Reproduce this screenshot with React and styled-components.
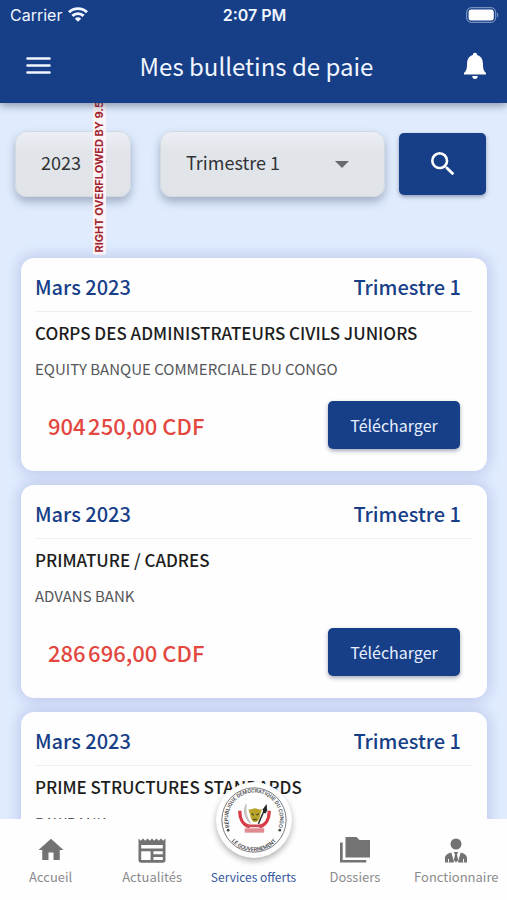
import React, { useState } from "react";
import styled, { createGlobalStyle } from "styled-components";

const blue = "#173f88";

const GlobalStyle = createGlobalStyle`
  * {
    box-sizing: border-box;
  }
  body {
    margin: 0;
    font-family: "Noto Sans CJK SC", "Open Sans", sans-serif;
    background: #e0ecfe;
  }
  button, select {
    font-family: inherit;
  }
`;

const Screen = styled.div`
  display: flex;
  flex-direction: column;
  height: 100vh;
  overflow: hidden;
`;

const Header = styled.header`
  position: relative;
  z-index: 2;
  background: ${blue};
  color: #f1f6ff;
  box-shadow: 0 3px 8px rgba(40, 50, 80, 0.45);
`;

const StatusBar = styled.div`
  display: grid;
  grid-template-columns: 1fr auto 1fr;
  align-items: center;
  height: 29px;
  padding: 0 8px 0 10px;
  font-family: Inter, "Liberation Sans", sans-serif;
  font-size: 16px;
`;

const Carrier = styled.div`
  display: flex;
  align-items: center;
  gap: 6px;
`;

const Clock = styled.div`
  font-weight: 600;
`;

const Battery = styled.svg`
  justify-self: end;
`;

const AppBar = styled.div`
  display: flex;
  align-items: center;
  justify-content: space-between;
  height: 74px;
  padding: 0 16px 0 22px;
`;

const Title = styled.h1`
  margin: 0;
  font-size: 24px;
  line-height: 32px;
  font-weight: 400;
`;

const IconButton = styled.button`
  display: flex;
  padding: 0;
  border: 0;
  background: none;
  color: inherit;
  cursor: pointer;
`;

const Content = styled.main`
  flex: 1;
  min-height: 0;
  overflow-y: auto;
  scrollbar-width: none;
`;

const Filters = styled.form`
  position: relative;
  display: flex;
  align-items: center;
  padding: 28px 21px 0 15px;
`;

const Field = styled.label`
  position: relative;
  display: flex;
  flex: ${(props) => props.$grow} 1 0;
  margin-right: ${(props) => props.$gap}px;
`;

const Select = styled.select`
  appearance: none;
  width: 100%;
  height: 66px;
  padding: 0 25px 4px;
  border: 1px solid #d3d9e3;
  border-radius: 12px;
  background: linear-gradient(#eceff5, #e1e5ea 30%, #e1e4e7);
  box-shadow: 0 5px 10px rgba(70, 80, 110, 0.4);
  color: #303236;
  font-size: 18px;
`;

const Arrow = styled.svg`
  position: absolute;
  right: ${(props) => props.$right}px;
  top: 30px;
  pointer-events: none;
`;

const Overflow = styled.div`
  position: absolute;
  left: 93px;
  bottom: -58px;
  width: 13px;
  padding-top: 2px;
  background: #fbf3f5;
  color: #a3252f;
  font-family: Inter, "Liberation Sans", sans-serif;
  font-size: 11px;
  line-height: 13px;
  font-weight: 700;
  white-space: nowrap;
  writing-mode: vertical-rl;
  transform: rotate(180deg);
`;

const PrimaryButton = styled.button`
  display: flex;
  align-items: center;
  justify-content: center;
  width: ${(props) => props.$width}px;
  height: ${(props) => props.$height}px;
  padding: 0;
  border: 0;
  border-radius: 5px;
  background: ${blue};
  box-shadow: 0 2px 4px rgba(30, 40, 80, 0.4);
  color: #e6efff;
  font-size: 16px;
  cursor: pointer;
`;

const List = styled.div`
  display: flex;
  flex-direction: column;
  gap: 14px;
  padding: 61px 20px 14px 21px;
`;

const Card = styled.article`
  padding: 12px 14px 22px;
  border-radius: 13px;
  background: #fefefe;
  box-shadow: 0 0 14px 3px rgba(90, 95, 180, 0.24);
`;

const CardHeader = styled.div`
  display: flex;
  justify-content: space-between;
  height: 42px;
  padding-right: 12px;
  border-bottom: 1px solid #efeff1;
  color: ${blue};
  font-size: 20px;
  line-height: 34px;
  font-weight: 500;
`;

const Service = styled.h2`
  margin: 7px 0 0;
  color: #1d1d20;
  font-size: 17px;
  line-height: 28px;
  font-weight: 500;
`;

const Bank = styled.p`
  margin: 10px 0 0;
  color: #55565a;
  font-size: 15px;
  line-height: 24px;
`;

const CardFooter = styled.div`
  display: flex;
  align-items: center;
  justify-content: space-between;
  margin-top: 20px;
  padding: 0 13px;
`;

const Amount = styled.span`
  color: #e2483f;
  font-size: 22px;
  line-height: 32px;
  font-weight: 500;
`;

const BottomNav = styled.nav`
  position: relative;
  z-index: 2;
  display: grid;
  grid-template-columns: repeat(5, 1fr);
  height: 81px;
  background: #fefefe;
`;

const NavItem = styled.a`
  display: flex;
  flex-direction: column;
  align-items: center;
  justify-content: flex-end;
  gap: 2px;
  padding-bottom: 13px;
  color: ${(props) => (props.$active ? "#3357a0" : "#8b8b8d")};
  font-size: ${(props) => (props.$active ? 12 : 13)}px;
  line-height: 20px;
  white-space: nowrap;
  text-decoration: none;

  svg {
    color: #737373;
  }
`;

const Seal = styled.span`
  position: absolute;
  left: 50%;
  top: -37px;
  width: 76px;
  height: 76px;
  margin-left: -38px;
  border-radius: 50%;
  background: #fefefe;
  box-shadow: 0 3px 6px rgba(0, 0, 0, 0.3);
`;

function WifiIcon() {
  return (
    <svg width="20" height="15" viewBox="0 0 20 15" fill="none" stroke="currentColor" strokeWidth="2.9">
      <path d="M1 5.2a13 13 0 0 1 18 0" />
      <path d="M4.4 8.9a8 8 0 0 1 11.2 0" />
      <path d="M10 14.8 6.8 11.7a4.5 4.5 0 0 1 6.4 0z" fill="currentColor" stroke="none" />
    </svg>
  );
}

function BatteryIcon() {
  return (
    <Battery width="33" height="16" viewBox="0 0 33 16">
      <rect x=".7" y=".7" width="29" height="14.6" rx="4.5" fill="none" stroke="#8fa5cd" />
      <rect x="2.6" y="2.6" width="25.2" height="10.8" rx="2.6" fill="#fff" />
      <path d="M31.2 5.5c1.3.6 1.3 4.4 0 5z" fill="#8fa5cd" />
    </Battery>
  );
}

function MenuIcon() {
  return (
    <svg width="32" height="32" viewBox="0 0 32 32" stroke="currentColor" strokeWidth="2.6" strokeLinecap="round">
      <path d="M5.5 8.5h22M5.5 15.5h22M5.5 22.5h22" />
    </svg>
  );
}

function BellIcon() {
  return (
    <svg width="32" height="32" viewBox="0 0 32 32" fill="#fff">
      <path d="M16 2.8c-1.3 0-2.1.8-2.1 2.2C10 6 8.2 9.2 8.1 13.4c-.1 4.5-.5 7.3-3.1 9.6v1.6h22V23c-2.6-2.3-3-5.1-3.1-9.6C23.8 9.2 22 6 18.1 5c0-1.4-.8-2.2-2.1-2.2z" />
      <path d="M13.3 26h5.4a2.7 2.9 0 0 1-5.4 0z" />
    </svg>
  );
}

function SearchIcon() {
  return (
    <svg width="32" height="32" viewBox="0 0 24 24" fill="#fff">
      <path d="M15.5 14h-.79l-.28-.27A6.47 6.47 0 0 0 16 9.5 6.5 6.5 0 1 0 9.5 16c1.61 0 3.09-.59 4.23-1.57l.27.28v.79l5 4.99L20.49 19l-4.99-5zm-6 0C7.01 14 5 11.99 5 9.5S7.01 5 9.5 5 14 7.01 14 9.5 11.99 14 9.5 14z" />
    </svg>
  );
}

function HomeIcon() {
  return (
    <svg width="30" height="30" viewBox="0 0 24 24" fill="currentColor">
      <path d="M10 20v-6h4v6h5v-8h3L12 3 2 12h3v8z" />
    </svg>
  );
}

function NewsIcon() {
  return (
    <svg width="32" height="30" viewBox="0 0 32 30" fill="currentColor" fillRule="evenodd">
      <path d="M2.5 3.5 4.7 5.7 7 3.5l2.2 2.2 2.3-2.2 2.3 2.2L16 3.5l2.2 2.2 2.3-2.2 2.2 2.2L25 3.5l2.2 2.2 2.3-2.2V25a2.7 2.7 0 0 1-2.7 2.7H5.2A2.7 2.7 0 0 1 2.5 25zM5.2 16.3V25h9.4v-8.7zm12.2 0v3h9.4v-3zm0 5.7v3h9.4v-3zM5.2 10v3.5h21.6V10z" />
    </svg>
  );
}

function FoldersIcon() {
  return (
    <svg width="32" height="30" viewBox="0 0 32 30" fill="currentColor">
      <path d="M6.5 2h11l3 3H31v17.5H6.5z" />
      <path d="M1 7.5h2.7v17.4h23.5v2.7H1z" />
    </svg>
  );
}

function ClerkIcon() {
  return (
    <svg width="30" height="30" viewBox="0 0 30 30" fill="currentColor">
      <circle cx="15" cy="9" r="5.5" />
      <path d="M10.3 17.5 13.2 27.5H4v-4.5c0-3 2.8-4.5 6.3-5.5zM19.7 17.5c3.5 1 6.3 2.5 6.3 5.5v4.5h-9.2z" />
      <path d="M13 17h4l-1 2.7 1.2 5.3-2.2 2.5-2.2-2.5 1.2-5.3z" />
      <path d="M7.5 24v3.5M22.5 24v3.5" stroke="#fefefe" />
    </svg>
  );
}

function Emblem() {
  return (
    <svg width="76" height="76" viewBox="0 0 78 78" fill="none">
      <defs>
        <path id="sealTop" d="M14 46.500A26.600 26.600 0 1 1 64 46.500" />
        <path id="sealBottom" d="M10 51A31 31 0 0 0 68 51" />
      </defs>
      <circle cx="39" cy="39" r="33" stroke="#77777a" strokeWidth="1" />
      <g fill="#3b3b3e" fontFamily="Roboto, sans-serif" fontWeight="500">
        <text fontSize="5.4">
          <textPath href="#sealTop" startOffset="50%" textAnchor="middle">
            RÉPUBLIQUE DÉMOCRATIQUE DU CONGO
          </textPath>
        </text>
        <text fontSize="5.6">
          <textPath href="#sealBottom" startOffset="50%" textAnchor="middle">
            LE GOUVERNEMENT
          </textPath>
        </text>
      </g>
      <circle cx="12.5" cy="49.5" r="1.4" fill="#444" />
      <circle cx="65.5" cy="49.5" r="1.4" fill="#444" />
      <path d="M24.500 29.500c-.5 8 3 14.500 10 16.500M54.500 29.500c.5 8-3 14.500-10 16.500" stroke="#d83a45" strokeWidth="3.4" />
      <path d="M31 23c-3.500 6-2 14 4.500 19.500-4-6-5.500-12-4.500-19.500z" fill="#d6d3d2" stroke="#aaa6a4" strokeWidth=".7" />
      <path d="M32 43.500h15l2 3H30z" fill="#cf4750" />
      <path d="M29.5 47.500h20v4.500h-20z" fill="#e08b90" />
      <path d="m43.500 43 6-14" stroke="#2c2f2c" strokeWidth="1.5" />
      <path d="m52 22.500-4 5.500.5 3.500 2.300.8 1.700-3z" fill="#252727" />
      <path d="M33.500 28c2 1 4-1 6.500-1s4.500 2 7 1c0 2-1 3.500-1.500 5-.5 4.500-2 8-5.300 8s-4.700-3.500-5.200-8c-.5-1.500-1.500-3-1.500-5z" fill="#b9a52c" />
      <path d="M36.500 32.500 39 34m5-1.500L41.500 34M38 38.500h4" stroke="#5d521c" strokeWidth="1.4" />
    </svg>
  );
}

function ArrowIcon({ right }) {
  return (
    <Arrow $right={right} width="14" height="7" viewBox="0 0 14 7" aria-hidden="true">
      <path d="M0 0h14L7 7z" fill="#68696c" />
    </Arrow>
  );
}

const payslips = [
  {
    service: "CORPS DES ADMINISTRATEURS CIVILS JUNIORS",
    bank: "EQUITY BANQUE COMMERCIALE DU CONGO",
    amount: "904\u202f250,00 CDF",
  },
  { service: "PRIMATURE / CADRES", bank: "ADVANS BANK", amount: "286\u202f696,00 CDF" },
  { service: "PRIME STRUCTURES STANDARDS", bank: "RAWBANK", amount: "286\u202f696,00 CDF" },
];

function Payslip({ item }) {
  return (
    <Card>
      <CardHeader>
        <span>Mars 2023</span>
        <span>Trimestre 1</span>
      </CardHeader>
      <Service>{item.service}</Service>
      <Bank>{item.bank}</Bank>
      <CardFooter>
        <Amount>{item.amount}</Amount>
        <PrimaryButton type="button" $width={132} $height={48}>
          Télécharger
        </PrimaryButton>
      </CardFooter>
    </Card>
  );
}

function App() {
  const [year, setYear] = useState("2023");
  const [quarter, setQuarter] = useState("Trimestre 1");

  return (
    <Screen>
      <GlobalStyle />
      <Header>
        <StatusBar>
          <Carrier>
            Carrier
            <WifiIcon />
          </Carrier>
          <Clock>2:07 PM</Clock>
          <BatteryIcon />
        </StatusBar>
        <AppBar>
          <IconButton aria-label="Menu">
            <MenuIcon />
          </IconButton>
          <Title>Mes bulletins de paie</Title>
          <IconButton aria-label="Notifications">
            <BellIcon />
          </IconButton>
        </AppBar>
      </Header>

      <Content>
        <Filters onSubmit={(e) => e.preventDefault()}>
          <Field $grow={116} $gap={29}>
            <Select aria-label="Année" value={year} onChange={(e) => setYear(e.target.value)}>
              <option>2023</option>
            </Select>
            <ArrowIcon right={24} />
          </Field>
          <Field $grow={225} $gap={14}>
            <Select aria-label="Trimestre" value={quarter} onChange={(e) => setQuarter(e.target.value)}>
              <option>Trimestre 1</option>
            </Select>
            <ArrowIcon right={36} />
          </Field>
          <PrimaryButton type="submit" aria-label="Rechercher" $width={87} $height={62}>
            <SearchIcon />
          </PrimaryButton>
          <Overflow>RIGHT OVERFLOWED BY 9.5 PIXELS</Overflow>
        </Filters>

        <List>
          {payslips.map((item) => (
            <Payslip key={item.service} item={item} />
          ))}
        </List>
      </Content>

      <BottomNav>
        <NavItem href="#accueil">
          <HomeIcon />
          Accueil
        </NavItem>
        <NavItem href="#actualites">
          <NewsIcon />
          Actualités
        </NavItem>
        <NavItem href="#services" $active>
          <Seal>
            <Emblem />
          </Seal>
          Services offerts
        </NavItem>
        <NavItem href="#dossiers">
          <FoldersIcon />
          Dossiers
        </NavItem>
        <NavItem href="#fonctionnaire">
          <ClerkIcon />
          Fonctionnaire
        </NavItem>
      </BottomNav>
    </Screen>
  );
}

export default App;
